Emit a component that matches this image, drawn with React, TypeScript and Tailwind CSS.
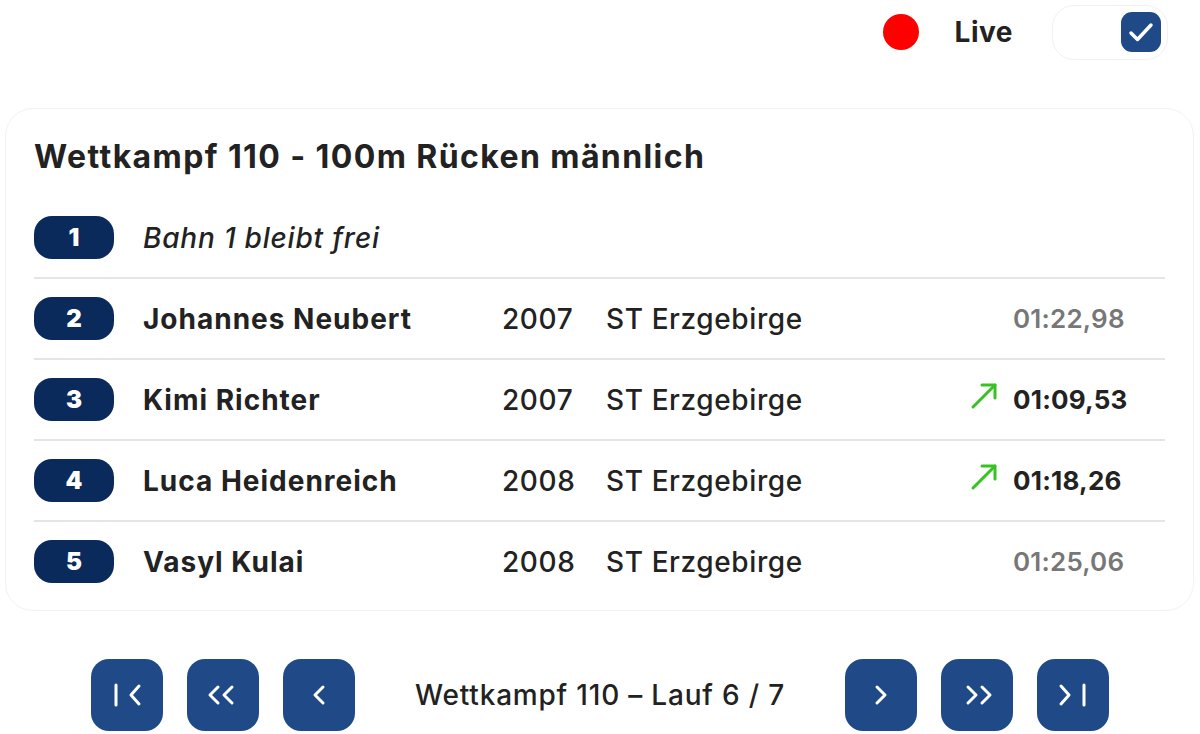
import React from "react";

// Lane list for one heat
const lanes = [
  { lane: 1, empty: "Bahn 1 bleibt frei" },
  { lane: 2, name: "Johannes Neubert", year: "2007", club: "ST Erzgebirge", time: "01:22,98", improved: false },
  { lane: 3, name: "Kimi Richter", year: "2007", club: "ST Erzgebirge", time: "01:09,53", improved: true },
  { lane: 4, name: "Luca Heidenreich", year: "2008", club: "ST Erzgebirge", time: "01:18,26", improved: true },
  { lane: 5, name: "Vasyl Kulai", year: "2008", club: "ST Erzgebirge", time: "01:25,06", improved: false },
];

const ArrowUp = () => (
  <svg width="28" height="28" viewBox="0 0 28 28" fill="none" stroke="#33c41f" strokeWidth="3" strokeLinecap="round" strokeLinejoin="round">
    <path d="M3 25 25 3" />
    <path d="M12 3h13v13" />
  </svg>
);

// navigation icons, drawn to match the thin chevrons of the reference
const NavIcon = ({ kind }: { kind: string }) => {
  const paths: Record<string, string[]> = {
    first: ["M7 8v20", "M30 9l-8 9 8 9"],
    prev2: ["M13 10l-8 8 8 8", "M27 10l-8 8 8 8"],
    prev: ["M22 10l-8 8 8 8"],
    next: ["M14 10l8 8-8 8"],
    next2: ["M9 10l8 8-8 8", "M23 10l8 8-8 8"],
    last: ["M29 8v20", "M6 9l8 9-8 9"],
  };
  return (
    <svg width="36" height="36" viewBox="0 0 36 36" fill="none" stroke="white" strokeWidth="3" strokeLinecap="round" strokeLinejoin="round">
      {paths[kind].map((d) => (
        <path key={d} d={d} />
      ))}
    </svg>
  );
};

const NavButton = ({ kind }: { kind: string }) => (
  <button type="button" className="w-[72px] h-[72px] rounded-[18px] bg-[#1f4a87] flex items-center justify-center">
    <NavIcon kind={kind} />
  </button>
);

export default function App() {
  return (
    <div
      className="w-[1200px] h-[734px] bg-white text-[#222] overflow-hidden"
      style={{ fontFamily: "Inter, 'Open Sans', sans-serif" }}
    >
      {/* HEADER */}
      <div className="h-[64px] flex items-center justify-end pr-[32px]">
        <div className="w-9 h-9 rounded-full bg-[#ff0000] mr-[36px]" />
        <span className="text-[28px] font-bold leading-none tracking-[0.5px]">Live</span>
        <div className="ml-[39px] w-[116px] h-[55px] rounded-[22px] border border-[#f1f1f1] flex items-center justify-end pr-[6px]">
          <div className="w-10 h-10 rounded-[11px] bg-[#1f4a87] flex items-center justify-center">
            <svg width="40" height="40" viewBox="0 0 40 40" fill="none" stroke="white" strokeWidth="3.5" strokeLinecap="round" strokeLinejoin="round">
              <path d="M10 21l6.5 6.5L30 13" />
            </svg>
          </div>
        </div>
      </div>

      {/* CARD */}
      <div className="mt-[44px] ml-[5px] w-[1189px] rounded-[28px] border border-[#f2f2f2] pl-[28px] pr-[28px] pt-[30px] pb-[9px]">
        <h1 className="text-[32px] leading-[36px] font-bold tracking-[1.4px] mb-[23px]">
          Wettkampf 110 - 100m Rücken männlich
        </h1>

        {lanes.map((l, i) => (
          <div
            key={l.lane}
            className={`flex items-center py-[18px] ${i < lanes.length - 1 ? "border-b-2 border-[#e5e5e5]" : ""}`}
          >
            <div className="w-[80px] h-[43px] rounded-[18px] bg-[#0a2a5c] text-white flex items-center justify-center text-[24px] font-black">
              {l.lane}
            </div>
            {l.empty ? (
              <div className="ml-[29px] text-[28px] italic font-medium tracking-[0.8px]">{l.empty}</div>
            ) : (
              <>
                <div className="ml-[29px] w-[359px] text-[28px] font-bold tracking-[1px]">{l.name}</div>
                <div className="w-[104px] text-[28px] font-medium tracking-[0.6px]">{l.year}</div>
                <div className="flex-1 text-[28px] font-medium tracking-[0.6px]">{l.club}</div>
                <div className="w-[195px] flex items-center">
                  <div className="w-[28px] h-[28px] mr-[15px] -mt-[8px]">{l.improved && <ArrowUp />}</div>
                  <span
                    className={`text-[26px] tracking-[0.2px] ${l.improved ? "font-bold text-[#222]" : "font-semibold text-[#777]"}`}
                  >
                    {l.time}
                  </span>
                </div>
              </>
            )}
          </div>
        ))}
      </div>

      {/* PAGINATION */}
      <div className="mt-[48px] flex items-center justify-center gap-6">
        <NavButton kind="first" />
        <NavButton kind="prev2" />
        <NavButton kind="prev" />
        <div className="mx-9 text-[28px] font-medium tracking-[0.8px]">Wettkampf 110 – Lauf 6 / 7</div>
        <NavButton kind="next" />
        <NavButton kind="next2" />
        <NavButton kind="last" />
      </div>
    </div>
  );
}
